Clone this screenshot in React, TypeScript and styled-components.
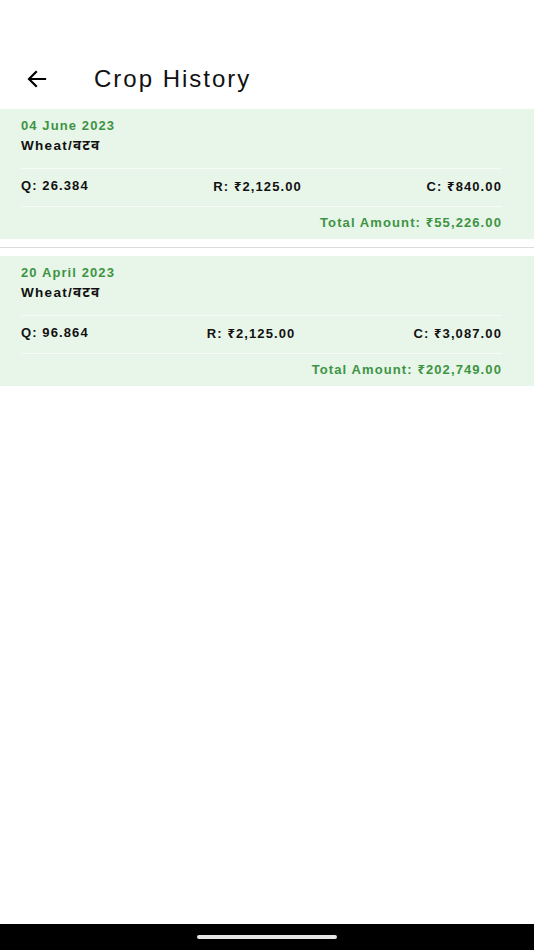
import React, { FunctionComponent } from 'react';
import styled, { createGlobalStyle } from 'styled-components';

const GlobalStyle = createGlobalStyle`
    html, body {
        margin: 0;
        padding: 0;
        background: #ffffff;
    }
    body {
        font-family: "Liberation Sans", Arial, "Noto Sans", sans-serif;
        -webkit-font-smoothing: antialiased;
    }
`;

interface ICropEntry {
    date: string;
    crop: string;
    quantity: string;
    rate: string;
    charges: string;
    total: string;
}

const entries: ICropEntry[] = [
    {
        date: '04 June 2023',
        crop: 'Wheat/वटव',
        quantity: '26.384',
        rate: '₹2,125.00',
        charges: '₹840.00',
        total: '₹55,226.00',
    },
    {
        date: '20 April 2023',
        crop: 'Wheat/वटव',
        quantity: '96.864',
        rate: '₹2,125.00',
        charges: '₹3,087.00',
        total: '₹202,749.00',
    },
];

const GREEN = '#3d9443';

const Screen = styled.div`
    display: flex;
    flex-direction: column;
    min-height: 950px;
    background: #ffffff;
`;

const Toolbar = styled.header`
    display: flex;
    align-items: center;
    height: 56px;
    padding: 51px 0 2px 24px;
`;

const BackButton = styled.button`
    display: flex;
    align-items: center;
    justify-content: center;
    width: 26px;
    height: 26px;
    padding: 0;
    border: none;
    background: transparent;
    color: #000000;
    cursor: pointer;
`;

const Title = styled.h1`
    margin: 0 0 0 44px;
    font-size: 24px;
    font-weight: 400;
    letter-spacing: 2px;
    color: #111111;
`;

const List = styled.div`
    display: flex;
    flex-direction: column;
`;

const Separator = styled.div`
    height: 1px;
    margin: 8px 0;
    background: #dcdcdc;
`;

const Card = styled.section`
    display: flex;
    flex-direction: column;
    padding: 8px 32px 2px 21px;
    background: #e8f5e9;
`;

const DateText = styled.div`
    font-size: 13px;
    font-weight: 700;
    letter-spacing: 1.1px;
    line-height: 18px;
    color: ${GREEN};
`;

const CropText = styled.div`
    margin: 2px 0 13px;
    font-family: "Liberation Sans", "Noto Sans", "DejaVu Sans", sans-serif;
    font-size: 13.5px;
    font-weight: 700;
    letter-spacing: 1.3px;
    line-height: 18px;
    color: #111111;
`;

const Divider = styled.div`
    height: 1px;
    background: #f6fbf6;
`;

const ValueRow = styled.div<{ $end?: boolean }>`
    display: flex;
    align-items: center;
    justify-content: ${(props) => (props.$end ? 'flex-end' : 'space-between')};
    box-sizing: border-box;
    height: ${(props) => (props.$end ? '30px' : '37px')};
    padding-bottom: ${(props) => (props.$end ? '1px' : '4px')};
`;

const Value = styled.span`
    font-size: 13px;
    font-weight: 700;
    letter-spacing: 1.1px;
    color: #111111;
`;

const TotalText = styled(Value)`
    color: ${GREEN};
`;

const Spacer = styled.div`
    flex: 1;
`;

const NavBar = styled.div`
    display: flex;
    align-items: center;
    justify-content: center;
    height: 26px;
    background: #000000;
`;

const HomePill = styled.div`
    width: 140px;
    height: 4px;
    border-radius: 2px;
    background: #e6e6e6;
`;

const BackArrow: FunctionComponent = () => (
    <svg width="24" height="24" viewBox="0 0 24 24" fill="none">
        <path d="M20 12H4.5M11 5l-7 7 7 7" stroke="#000" strokeWidth="2.2" strokeLinecap="square" />
    </svg>
);

const CropCard: FunctionComponent<{ entry: ICropEntry }> = ({ entry }) => (
    <Card>
        <DateText>{entry.date}</DateText>
        <CropText>{entry.crop}</CropText>
        <Divider />
        <ValueRow>
            <Value>Q: {entry.quantity}</Value>
            <Value>R: {entry.rate}</Value>
            <Value>C: {entry.charges}</Value>
        </ValueRow>
        <Divider />
        <ValueRow $end>
            <TotalText>Total Amount: {entry.total}</TotalText>
        </ValueRow>
    </Card>
);

const App: FunctionComponent = () => (
    <Screen>
        <GlobalStyle />
        <Toolbar>
            <BackButton aria-label="Back">
                <BackArrow />
            </BackButton>
            <Title>Crop History</Title>
        </Toolbar>
        <List>
            {entries.map((entry, index) => (
                <React.Fragment key={entry.date}>
                    {index > 0 && <Separator />}
                    <CropCard entry={entry} />
                </React.Fragment>
            ))}
        </List>
        <Spacer />
        <NavBar>
            <HomePill />
        </NavBar>
    </Screen>
);

export default App;
